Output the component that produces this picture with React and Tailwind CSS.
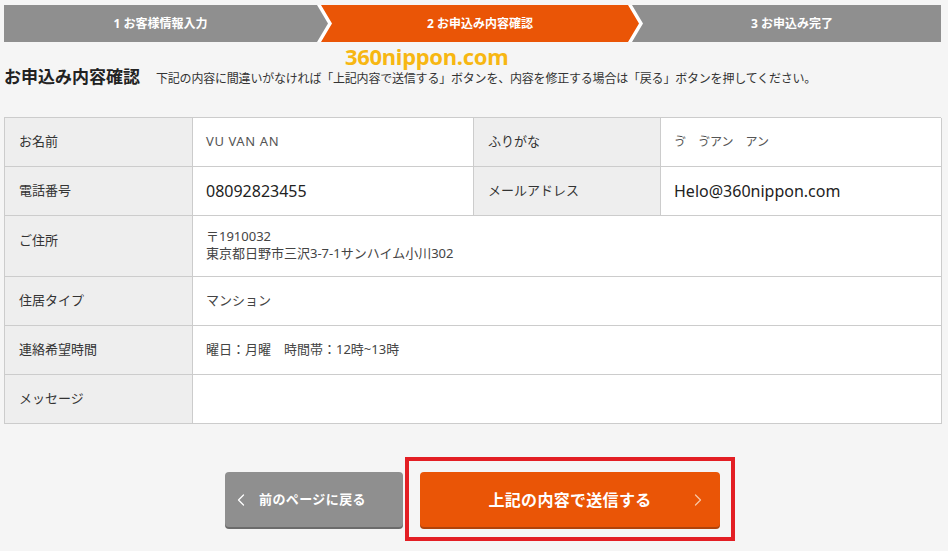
import { ChevronLeft, ChevronRight } from 'lucide-react';

const FONT = { fontFamily: '"Noto Sans", "Noto Sans CJK JP", sans-serif' };

// 確認画面の項目
const rows = [
  { label: 'お名前', value: 'VU VAN AN', label2: 'ふりがな', value2: 'ゔ　ゔアン　アン' },
  { label: '電話番号', value: '08092823455', big: true, label2: 'メールアドレス', value2: 'Helo@360nippon.com' },
];

const wideRows = [
  { label: 'ご住所', lines: ['〒1910032', '東京都日野市三沢3-7-1サンハイム小川302'], top: true },
  { label: '住居タイプ', lines: ['マンション'] },
  { label: '連絡希望時間', lines: ['曜日：月曜　時間帯：12時~13時'] },
  { label: 'メッセージ', lines: [] },
];

function Steps() {
  return (
    <div className="flex h-[37px] bg-white text-[12px] font-bold text-white">
      <div className="flex w-[324px] items-center justify-center bg-[#8f8f8f] pr-[11px] [clip-path:polygon(0_0,calc(100%_-_11px)_0,100%_50%,calc(100%_-_11px)_100%,0_100%)]">
        1 お客様情報入力
      </div>
      <div className="-ml-[7px] flex w-[318px] items-center justify-center bg-[#ea5506] [clip-path:polygon(0_0,calc(100%_-_11px)_0,100%_50%,calc(100%_-_11px)_100%,0_100%,11px_50%)]">
        2 お申込み内容確認
      </div>
      <div className="-ml-[7px] flex flex-1 items-center justify-center bg-[#8f8f8f] pl-[11px] [clip-path:polygon(0_0,100%_0,100%_100%,0_100%,11px_50%)]">
        3 お申込み完了
      </div>
    </div>
  );
}

export default function App() {
  return (
    <div className="min-h-[551px] bg-[#f5f5f5] pt-[5px] text-[#333]" style={FONT}>
      <div className="relative ml-[4px] w-[937px]">
        <Steps />

        <div className="pointer-events-none absolute left-[341px] top-[40px] text-[22px] font-bold leading-none tracking-[-0.3px] text-[#f7b712]">
          360nippon.com
        </div>

        <div className="mt-[23px] flex items-baseline">
          <h1 className="text-[17px] font-bold leading-[24px] text-[#222]">お申込み内容確認</h1>
          <p className="ml-[16px] text-[12px] tracking-[-0.2px] text-[#333]">
            下記の内容に間違いがなければ「上記内容で送信する」ボタンを、内容を修正する場合は「戻る」ボタンを押してください。
          </p>
        </div>

        <div className="mt-[28px] border-t border-l border-[#cccccc] bg-white text-[13px]">
          {rows.map(r => (
            <div key={r.label} className="grid h-[49px] grid-cols-[188px_281px_187px_281px]">
              <div className="flex items-center border-r border-b border-[#cccccc] bg-[#eeeeee] pl-[14px]">{r.label}</div>
              <div className={`flex items-center border-r border-b border-[#cccccc] pl-[13px] ${r.big ? 'text-[16px] text-[#222]' : 'tracking-[0.6px] text-[#555]'}`}>{r.value}</div>
              <div className="flex items-center border-r border-b border-[#cccccc] bg-[#eeeeee] pl-[14px]">{r.label2}</div>
              <div className={`flex items-center border-r border-b border-[#cccccc] pl-[13px] ${r.big ? 'text-[16px] text-[#222]' : 'text-[12px] text-[#555]'}`}>{r.value2}</div>
            </div>
          ))}
          {wideRows.map(r => (
            <div key={r.label} className={`grid grid-cols-[188px_749px] ${r.top ? 'h-[61px]' : 'h-[49px]'}`}>
              <div className={`flex border-r border-b border-[#cccccc] bg-[#eeeeee] pl-[14px] ${r.top ? 'items-start pt-[15px]' : 'items-center'}`}>{r.label}</div>
              <div className={`flex flex-col border-r border-b border-[#cccccc] pl-[13px] text-[#444] ${r.top ? 'justify-start pt-[12px] leading-[17px]' : 'justify-center'}`}>
                {r.lines.map(l => <span key={l}>{l}</span>)}
              </div>
            </div>
          ))}
        </div>

        <div className="mt-[48px] flex justify-center gap-[17px]">
          <button className="flex h-[55px] w-[178px] items-center rounded-[4px] bg-[#8f8f8f] pl-[6px] text-[13px] font-bold text-white shadow-[0_2px_0_#6b6b6b]">
            <ChevronLeft size={20} strokeWidth={1.5} />
            <span className="ml-[8px] tracking-[0.4px]">前のページに戻る</span>
          </button>
          <div className="relative">
            <button className="relative flex h-[55px] w-[300px] items-center justify-center rounded-[4px] bg-[#ea5506] text-[16px] font-bold tracking-[0.3px] text-white shadow-[0_2px_0_#b0430a]">
              上記の内容で送信する
              <ChevronRight size={20} strokeWidth={1.5} className="absolute right-[12px] text-[#f7c7a6]" />
            </button>
            <div className="pointer-events-none absolute -left-[15px] -right-[15px] -top-[15px] -bottom-[14px] border-4 border-[#e31e24]" />
          </div>
        </div>
      </div>
    </div>
  );
}
